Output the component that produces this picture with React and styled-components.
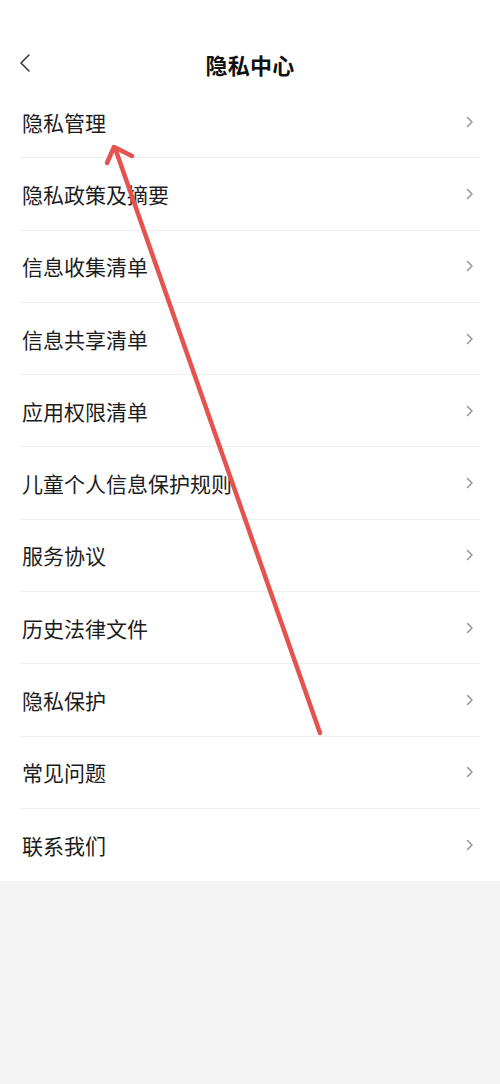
import React from "react";
import styled, { createGlobalStyle } from "styled-components";

const GlobalStyle = createGlobalStyle`
  html, body {
    margin: 0;
    padding: 0;
    background: #f3f3f3;
  }
  body {
    font-family: "Noto Sans CJK SC", "Noto Sans", sans-serif;
    color: #1a1a1a;
  }
`;

const Page = styled.div`
  position: relative;
  width: 500px;
  height: 1084px;
  background: #f3f3f3;
  overflow: hidden;
`;

const Sheet = styled.div`
  background: #fff;
`;

const Header = styled.div`
  position: relative;
  display: flex;
  align-items: center;
  justify-content: center;
  height: 44px;
  padding-top: 42px;
`;

const BackButton = styled.button`
  all: unset;
  position: absolute;
  left: 19px;
  top: 52px;
  width: 16px;
  height: 22px;
  display: flex;
  align-items: center;
  color: #333;
`;

const Title = styled.div`
  font-size: 22px;
  font-weight: 700;
  color: #111;
  letter-spacing: 0.3px;
`;

const List = styled.div`
  padding: 0 20px;
`;

const Row = styled.div`
  display: flex;
  align-items: center;
  justify-content: space-between;
  height: 72.3px;
  box-sizing: border-box;
  padding: 0 6px 0 2px;
  border-bottom: ${(p) => (p.$last ? "none" : "1px solid #eeeeee")};
`;

const Label = styled.span`
  font-size: 21px;
  color: #1c1c1c;
`;

const Chevron = () => (
  <svg width="8" height="12" viewBox="0 0 8 12" fill="none">
    <path d="M1.5 1.5 6 6l-4.5 4.5" stroke="#9a9a9a" strokeWidth="1.6" strokeLinecap="round" strokeLinejoin="round" />
  </svg>
);

const Annotation = styled.svg`
  position: absolute;
  left: 0;
  top: 0;
  pointer-events: none;
`;

const items = [
  "隐私管理",
  "隐私政策及摘要",
  "信息收集清单",
  "信息共享清单",
  "应用权限清单",
  "儿童个人信息保护规则",
  "服务协议",
  "历史法律文件",
  "隐私保护",
  "常见问题",
  "联系我们",
];

export default function App() {
  return (
    <Page>
      <GlobalStyle />
      <Sheet>
        <Header>
          <BackButton>
            <svg width="12" height="20" viewBox="0 0 12 20" fill="none">
              <path d="M10 2 2 10l8 8" stroke="#333" strokeWidth="1.5" strokeLinecap="round" strokeLinejoin="round" />
            </svg>
          </BackButton>
          <Title>隐私中心</Title>
        </Header>
        <List>
          {items.map((text, i) => (
            <Row key={text} $last={i === items.length - 1}>
              <Label>{text}</Label>
              <Chevron />
            </Row>
          ))}
        </List>
      </Sheet>
      <Annotation width="500" height="1084" viewBox="0 0 500 1084">
        <g stroke="#e5534e" strokeWidth="4.5" strokeLinecap="round" strokeLinejoin="round" fill="none">
          <path d="M320 733 L115 148" />
          <path d="M107 163 L114 147 L132 156" />
        </g>
      </Annotation>
    </Page>
  );
}
